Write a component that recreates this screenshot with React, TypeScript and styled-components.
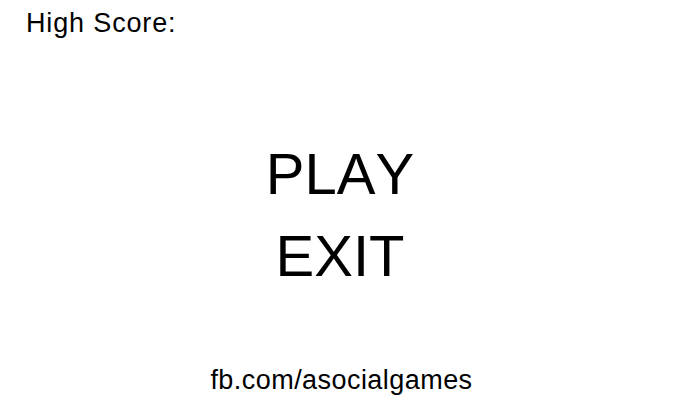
import React from "react";
import styled, { createGlobalStyle } from "styled-components";

const GlobalStyle = createGlobalStyle`
  html, body {
    margin: 0;
    padding: 0;
    background-color: #ffffff;
  }
  body {
    font-family: "Liberation Sans", Arial, sans-serif;
    font-kerning: none;
    color: #000000;
  }
`;

const Screen = styled.div`
  display: flex;
  flex-direction: column;
  height: 400px;
  width: 685px;
  box-sizing: border-box;
  padding: 8px 0 4px 0;
`;

const ScoreBar = styled.div`
  padding-left: 26px;
  font-size: 27px;
  letter-spacing: 0.85px;
`;

const Menu = styled.nav`
  display: flex;
  flex-direction: column;
  align-items: center;
  margin-top: 94px;
  padding-right: 5px;
`;

const MenuItem = styled.div`
  font-size: 58px;
  line-height: 82px;
  cursor: pointer;
`;

const Footer = styled.div`
  margin-top: auto;
  text-align: center;
  font-size: 27px;
  letter-spacing: 0.45px;
  padding-right: 2px;
`;

function App() {
  return (
    <>
      <GlobalStyle />
      <Screen>
        <ScoreBar>High Score:</ScoreBar>
        <Menu>
          <MenuItem>PLAY</MenuItem>
          <MenuItem>EXIT</MenuItem>
        </Menu>
        <Footer>fb.com/asocialgames</Footer>
      </Screen>
    </>
  );
}

export default App;
